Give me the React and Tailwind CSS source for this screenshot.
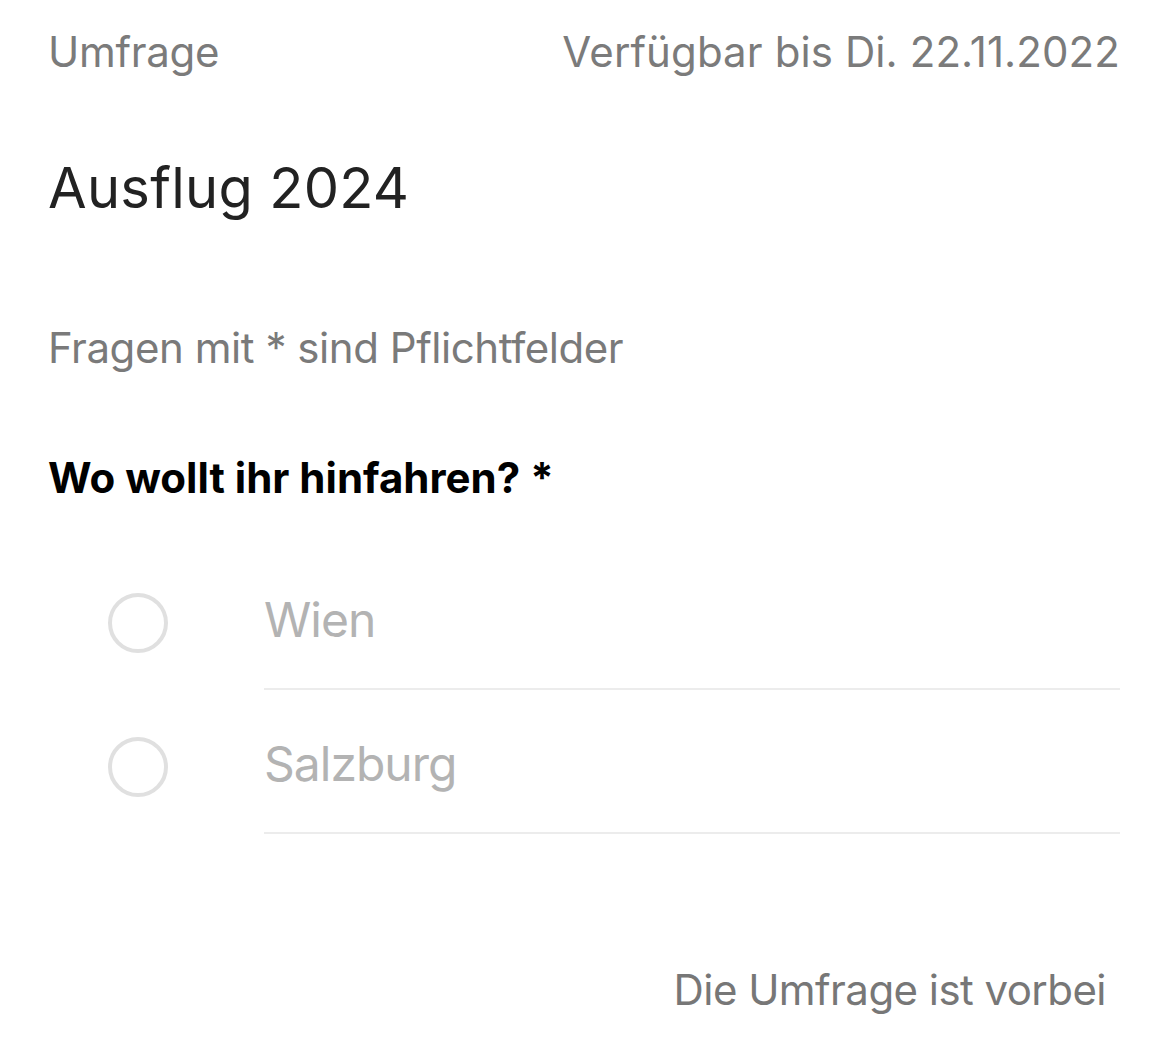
export default function App() {
  const options = ["Wien", "Salzburg"];
  return (
    <div className="min-h-[1039px] w-full bg-white" style={{ fontFamily: "Inter, 'Noto Sans', sans-serif" }}>
      <div className="flex justify-between pl-[48px] pr-[50px] pt-[27px] text-[42px] leading-[50px] text-[#7b7b7b]">
        <span className="tracking-[-0.3px]">Umfrage</span>
        <span className="tracking-[0.1px]">Verfügbar bis Di. 22.11.2022</span>
      </div>
      <h1 className="mt-[77px] pl-[48px] text-[56px] leading-[68px] tracking-[0.3px] text-[#222222]">Ausflug 2024</h1>
      <p className="mt-[101px] pl-[48px] text-[42px] leading-[50px] tracking-[-0.45px] text-[#7a7a7a]">Fragen mit * sind Pflichtfelder</p>
      <p className="mt-[80px] pl-[48px] text-[42px] font-bold leading-[50px] text-black">Wo wollt ihr hinfahren? *</p>
      <div className="mt-[43px] pr-[50px]">
        {options.map((o) => (
          <div key={o} className="flex items-start pl-[108px]">
            <div className="mt-[47px] h-[60px] w-[60px] shrink-0 rounded-full border-[4px] border-[#e0e0e0]" />
            <div className="ml-[96px] h-[144px] flex-1 border-b-2 border-[#ececec] pt-[45px] text-[48px] leading-[58px] tracking-[-1px] text-[#b3b3b3]">
              {o}
            </div>
          </div>
        ))}
      </div>
      <div className="mt-[131px] flex justify-end pr-[64px] text-[42px] leading-[50px] tracking-[-0.55px] text-[#777777]">
        Die Umfrage ist vorbei
      </div>
    </div>
  );
}
